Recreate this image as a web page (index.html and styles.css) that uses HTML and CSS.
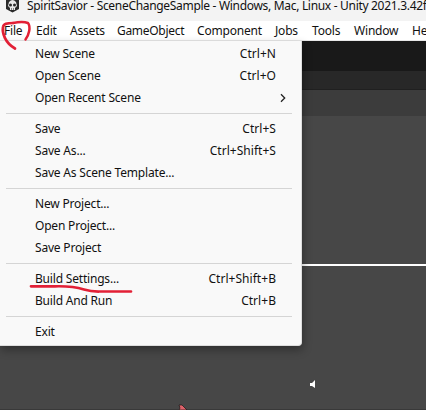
FILE: index.html
```html
<!DOCTYPE html>
<html lang="en">
<head>
<meta charset="utf-8">
<title>SpiritSavior - Unity</title>
<link rel="stylesheet" href="styles.css">
</head>
<body>
<div class="window">
  <header class="titlebar">
    <svg class="logo" width="15" height="14" viewBox="0 0 15 14"><path d="M1 0H14V9l-6.500 3.500L1 9z" fill="#292929"/><path d="M4 2q3.500-4 7 0l1 4-2 2v2H5V8L3 6z" fill="#e9e9e9"/><circle cx="5.500" cy="5" r="1.500" fill="#292929"/><circle cx="9.500" cy="5" r="1.500" fill="#292929"/><path d="M6.500 8v2M8.500 8v2" stroke="#555" stroke-width=".7"/></svg>
    <span class="title">SpiritSavior - SceneChangeSample - Windows, Mac, Linux - Unity 2021.3.42f</span>
  </header>
  <nav class="menubar"><span class="file">File</span><span class="edit">Edit</span><span class="assets">Assets</span><span class="object">GameObject</span><span class="component">Component</span><span class="jobs">Jobs</span><span class="tools">Tools</span><span class="win">Window</span><span>He</span></nav>
  <main class="workspace">
    <div class="menu">
      <div class="item"><span>New Scene</span><kbd>Ctrl+N</kbd></div>
      <div class="item"><span>Open Scene</span><kbd>Ctrl+O</kbd></div>
      <div class="item sub"><span>Open Recent Scene</span><svg width="6" height="10" viewBox="0 0 6 10"><path d="M1 1.300 4.700 5 1 8.700" fill="none" stroke="#222" stroke-width="1.300"/></svg></div>
      <hr>
      <div class="item"><span>Save</span><kbd>Ctrl+S</kbd></div>
      <div class="item"><span>Save As...</span><kbd>Ctrl+Shift+S</kbd></div>
      <div class="item"><span>Save As Scene Template...</span></div>
      <hr>
      <div class="item"><span>New Project...</span></div>
      <div class="item"><span>Open Project...</span></div>
      <div class="item"><span>Save Project</span></div>
      <hr>
      <div class="item"><span>Build Settings...</span><kbd>Ctrl+Shift+B</kbd></div>
      <div class="item"><span>Build And Run</span><kbd>Ctrl+B</kbd></div>
      <hr>
      <div class="item"><span>Exit</span></div>
    </div>
    <div class="editor"><div class="toolbar"></div><div class="tabs"></div><div class="options"></div><div class="scene"></div><div class="view"></div></div>
  </main>
  <svg class="marks" width="426" height="410" viewBox="0 0 426 410">
    <g fill="none" stroke="#e22036" stroke-linecap="round" stroke-linejoin="round">
      <path d="M13 23C18 22 24 21.500 28 23C31 27 29 35 25.500 39.500" stroke-width="2.500"/>
      <path d="M13 23C7 23 3.500 23.500 3 27C2 33 5 43 15 48.500" stroke-width="2.700"/>
      <path d="M31 286.300H55C66 286 76 287 84 289.500C92 292 94 291.500 103 291.500H131" stroke-width="2.700"/>
    </g>
    <path d="M310 383h2l3-3v8l-3-2h-2z" fill="#fff"/>
    <path d="M179 405h3l5 5h-8l1-2z" fill="#df626a" stroke="#171717" stroke-width=".7"/>
    <path d="M187 409.500H426M0 409.500H179" stroke="#393939"/>
  </svg>
</div>
</body>
</html>
```
FILE: styles.css
```css
* { box-sizing: border-box; }
body { margin: 0; overflow: hidden; }
.window { position: relative; width: 426px; height: 410px; overflow: hidden; background: #474747; color: #111; font: 12px/22px "Noto Sans", "Open Sans", sans-serif; letter-spacing: -0.19px; white-space: nowrap; }
.titlebar { height: 21px; display: flex; background: #f3f3f3; padding-left: 5px; }
.logo { flex: none; margin-right: 7px; }
.title { line-height: 12px; letter-spacing: -0.31px; }
.menubar { height: 20px; display: flex; background: #fff; border-bottom: 1px solid #e8e8e8; padding-left: 4px; line-height: 19px; }
.menubar span { flex: none; }
.file { width: 32px; }
.edit { width: 34px; }
.assets { width: 47px; }
.object { width: 80px; letter-spacing: -0.3px; }
.component { width: 78px; }
.jobs { width: 37px; }
.tools { width: 42px; }
.win { width: 58px; }
.workspace { height: 369px; display: flex; align-items: flex-start; }
.menu { flex: none; width: 302px; height: 305px; padding: 2px 9px 0 6px; background: #f9f9f9; border-right: 1px solid #dedede; border-bottom: 1px solid #dedede; border-radius: 0 0 4px 0; box-shadow: 1px 4px 10px #0005; z-index: 1; }
.item { height: 22px; display: flex; justify-content: space-between; padding: 0 16px 0 29px; }
.sub { padding-right: 6px; align-items: center; }
kbd { font: inherit; letter-spacing: 0.04px; }
hr { height: 1px; border: 0; margin: 4px 0; background: #d5d5d5; }
.editor { flex: 1; height: 369px; display: flex; flex-direction: column; }
.toolbar { height: 30px; background: #191919; }
.tabs { height: 19px; background: #282828; border-bottom: 1px solid #202020; }
.options { height: 26px; background: #3c3c3c; }
.scene { height: 150px; background: #474747; border-bottom: 2px solid #fff; }
.view { flex: 1; background: #474747; }
.marks { position: absolute; left: 0; top: 0; z-index: 2; pointer-events: none; }
```
